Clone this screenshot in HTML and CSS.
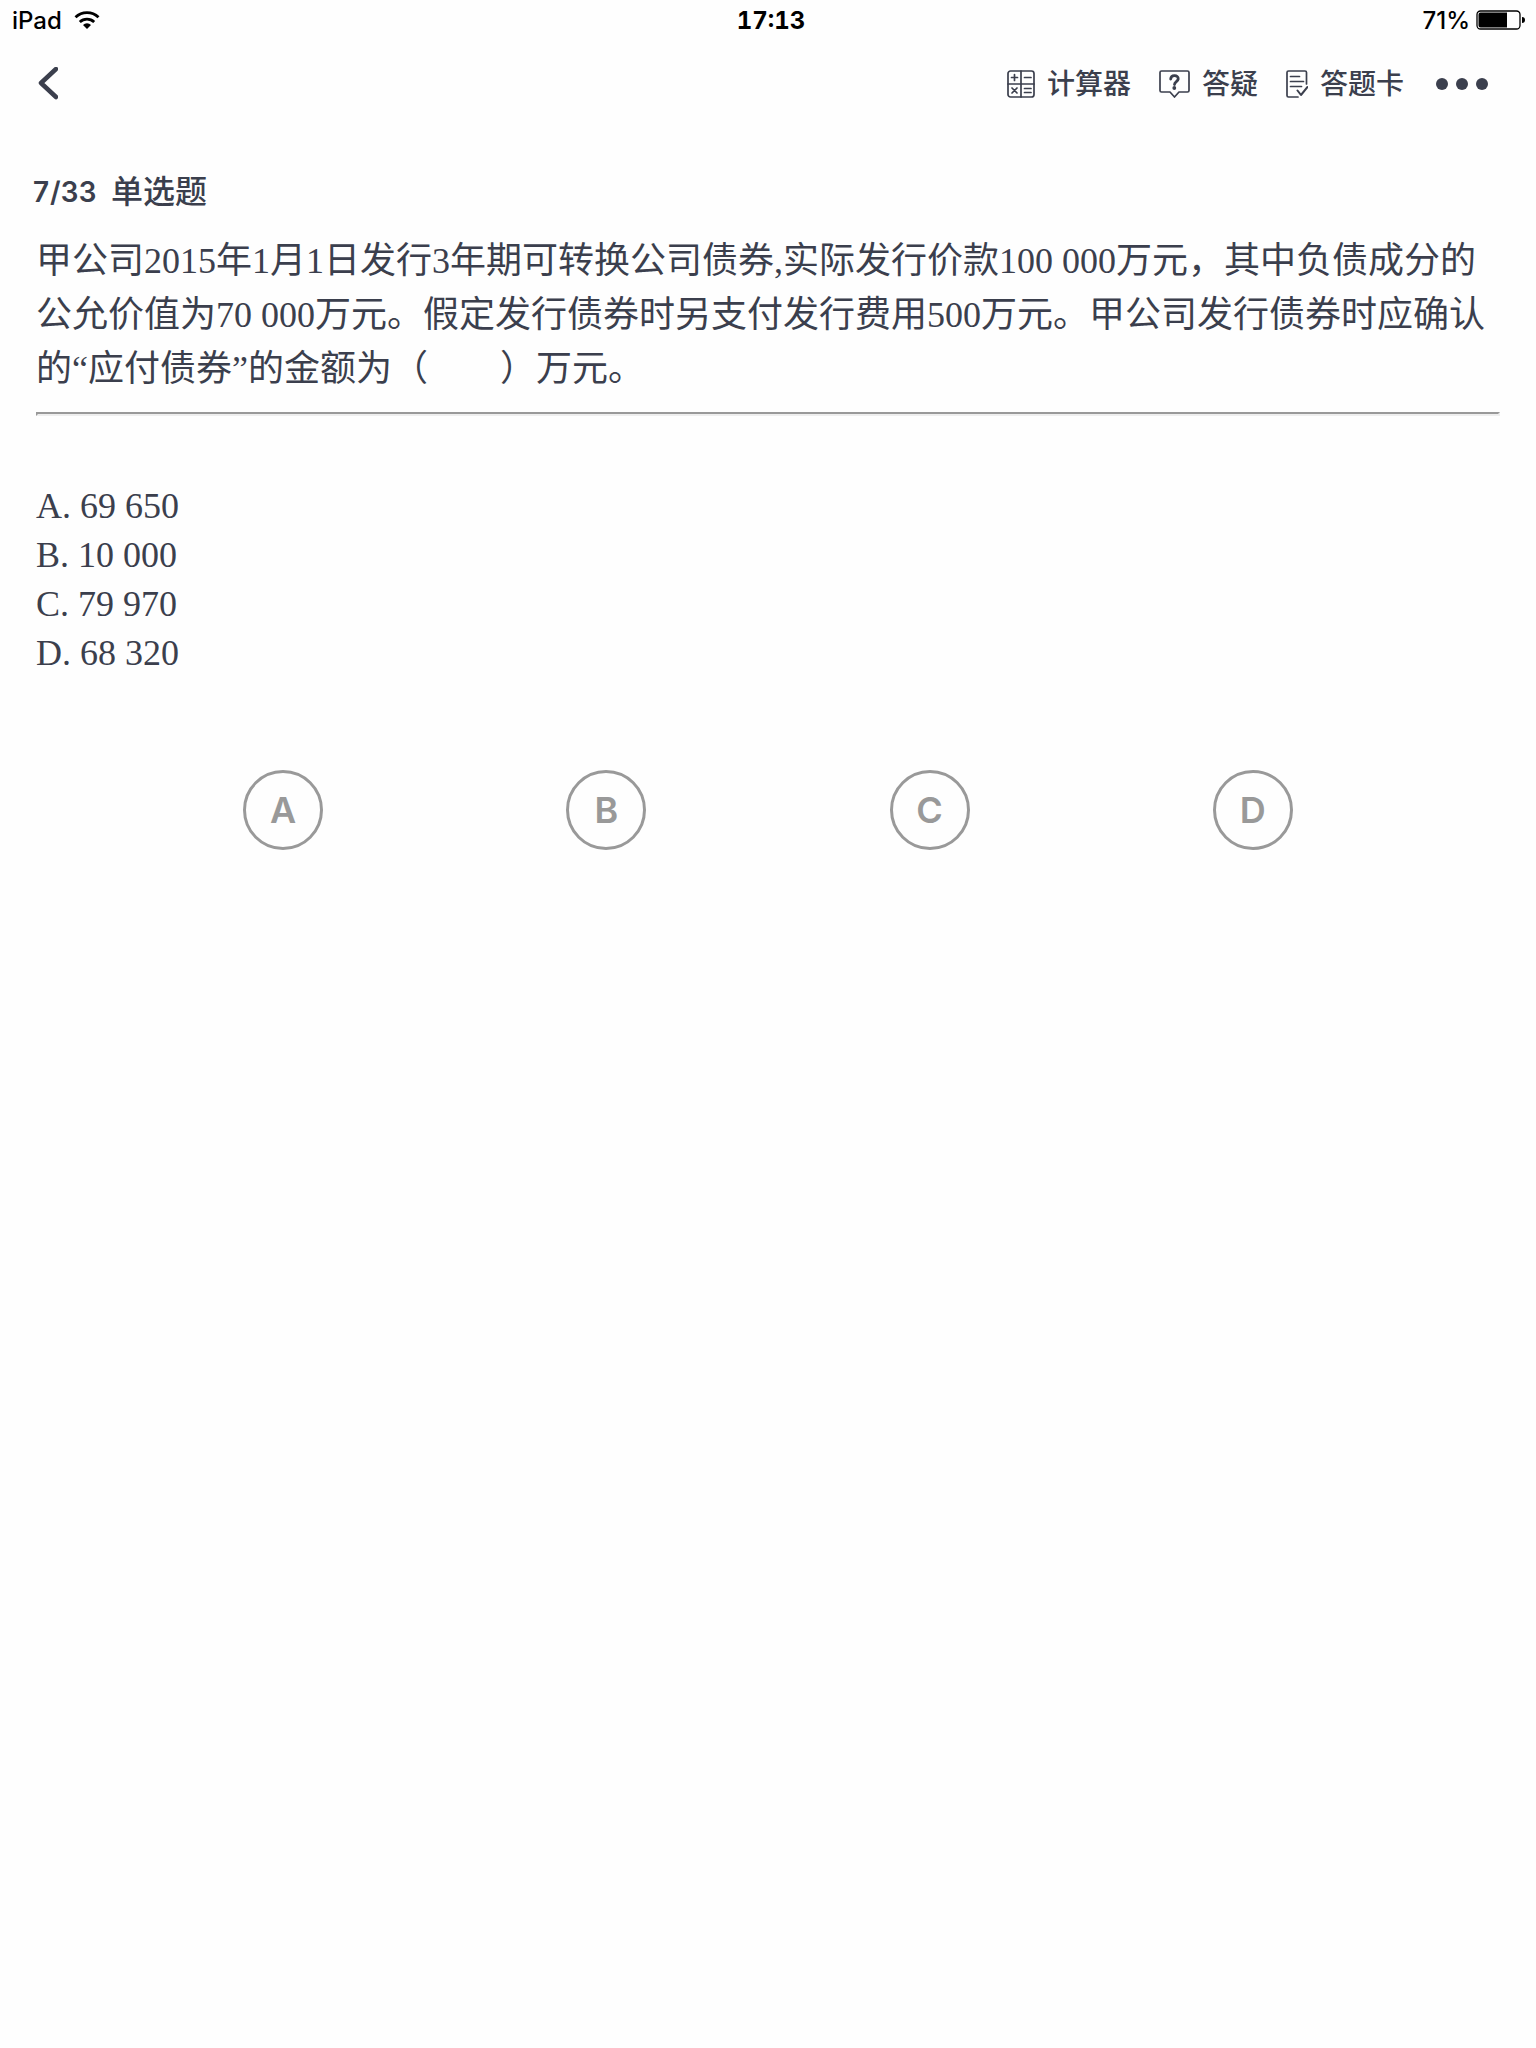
FILE: index.html
```html
<!DOCTYPE html>
<html lang="zh-CN">
<head>
    <meta charset="UTF-8">
    <meta name="viewport" content="width=device-width, initial-scale=1.0">
    <title>单选题</title>
    <link rel="stylesheet" href="styles.css">
</head>
<body>
    <div class="status-bar">
        <div class="status-left">
            <span>iPad</span>
            <svg class="wifi" width="26" height="20" viewBox="0 0 26 20" aria-hidden="true">
                <path d="M1.500 7.300a16.500 16.500 0 0 1 23 0M5.800 12a10.400 10.400 0 0 1 14.400 0" fill="none" stroke="#000" stroke-width="2.800"/>
                <path d="M13 19l-4-4a5.6 5.6 0 0 1 8 0z"/>
            </svg>
        </div>
        <div class="status-time">17:13</div>
        <div class="status-right">
            <span>71%</span>
            <svg width="50" height="20" viewBox="0 0 50 20" aria-hidden="true">
                <rect x="1" y="1" width="43" height="18" rx="3.5" fill="none" stroke="#000" stroke-width="1.3"/>
                <path d="M4.500 2.500H31v15H4.500a2 2 0 0 1-2-2v-11a2 2 0 0 1 2-2zM46 7q3 0 3 3t-3 3z"/>
            </svg>
        </div>
    </div>

    <header class="nav">
        <button type="button" class="nav-btn back" aria-label="返回">
            <svg width="20" height="34" viewBox="0 0 20 34"><path d="M18 2L3 16 18 30" stroke-width="4.500"/></svg>
        </button>
        <button type="button" class="nav-btn">
            <svg width="28" height="28" viewBox="0 0 28 28">
                <rect x="1" y="1" width="26" height="26" rx="2.500"/>
                <path d="M14 1v26M1 14h26M4.500 7.500h6M7.500 4.500v6M17.500 7.500h6.500M5 18l5 5M10 18l-5 5M17.500 18.500h6.500M17.500 22.500h6.500"/>
            </svg>
            <span>计算器</span>
        </button>
        <button type="button" class="nav-btn">
            <svg width="31" height="28" viewBox="0 0 31 28">
                <path d="M2.500 1h26q1.500 0 1.500 1.500v18q0 1.500-1.500 1.500h-8.500l-4.500 5-4.500-5h-8.500q-1.500 0-1.500-1.500v-18q0-1.500 1.500-1.500z"/>
                <path d="M11.700 9c.3-4.800 7.800-4.300 7.500 0-.3 2.700-3.700 2.700-3.700 5.600" stroke-width="2.800"/>
                <circle class="fill" cx="15.300" cy="18" r="1.900"/>
            </svg>
            <span>答疑</span>
        </button>
        <button type="button" class="nav-btn card">
            <svg width="22" height="28" viewBox="0 0 22 28">
                <path d="M20.500 14V2.500q0-1.500-1.500-1.500H2.500Q1 1 1 2.500v23q0 1.500 1.500 1.500h9.500M4.500 6.500h9M4.500 11.500h13M4.500 16.500h11"/>
                <path d="M11.500 20.500l3.500 4.500 6.500-8" stroke-width="2"/>
            </svg>
            <span>答题卡</span>
        </button>
        <button type="button" class="nav-btn more" aria-label="更多">
            <svg width="52" height="12" viewBox="0 0 52 12">
                <circle class="fill" cx="6" cy="6" r="6"/>
                <circle class="fill" cx="26" cy="6" r="6"/>
                <circle class="fill" cx="46" cy="6" r="6"/>
            </svg>
        </button>
    </header>

    <main>
        <h1 class="title"><span class="count">7/33</span>单选题</h1>
        <div class="question">
            <p>甲公司2015年1月1日发行3年期可转换公司债券,实际发行价款100 000万元，其中负债成分的公允价值为70 000万元。假定发行债券时另支付发行费用500万元。甲公司发行债券时应确认的“应付债券”的金额为（　　）万元。</p>
            <hr>
            <ol class="options">
                <li>A. 69 650</li>
                <li>B. 10 000</li>
                <li>C. 79 970</li>
                <li>D. 68 320</li>
            </ol>
        </div>
        <div class="answers">
            <button type="button">A</button>
            <button type="button">B</button>
            <button type="button">C</button>
            <button type="button">D</button>
        </div>
    </main>
</body>
</html>
```

FILE: styles.css
```css
body {
    margin: 0;
    background: #fefefe;
    color: #3b3f4d;
    font-family: Inter, "Noto Sans CJK SC", sans-serif;
}
.status-bar {
    display: grid;
    grid-template-columns: 1fr auto 1fr;
    align-items: center;
    height: 40px;
    padding: 0 10px 0 12px;
    color: #000;
    font-size: 24px;
    font-weight: 500;
}
.status-left, .status-right {
    display: flex;
    align-items: center;
    gap: 12px;
}
.status-right {
    justify-content: flex-end;
    gap: 6px;
}
.status-time {
    padding-left: 4px;
    font-weight: 700;
    font-variant-numeric: tabular-nums;
}
.nav {
    display: flex;
    align-items: center;
    gap: 28px;
    height: 88px;
    padding: 0 48px 0 38px;
}
.nav-btn {
    display: flex;
    align-items: center;
    gap: 12px;
    padding: 0;
    border: 0;
    background: none;
    color: inherit;
    font: 500 28px/40px Inter, "Noto Sans CJK SC", sans-serif;
    cursor: pointer;
}
.nav-btn svg {
    fill: none;
    stroke: #3b3f4d;
    stroke-width: 1.7;
    stroke-linecap: round;
    stroke-linejoin: round;
}
.nav-btn .fill {
    fill: #3b3f4d;
    stroke: none;
}
.back {
    margin-right: auto;
}
.more {
    margin-left: 4px;
}
.title {
    display: flex;
    align-items: center;
    gap: 14px;
    margin: 40px 32px 18px;
    font-size: 32px;
    font-weight: 500;
    line-height: 48px;
}
.count {
    font-size: 28px;
    font-weight: 600;
    font-variant-numeric: tabular-nums;
}
.question {
    padding: 0 36px;
    font-family: "Liberation Serif", "Noto Sans CJK SC", serif;
    font-size: 36px;
}
.question p {
    margin: 0;
    line-height: 54px;
}
.question hr {
    margin: 16px 0 66px;
    border: 2px solid;
    border-color: #999 #eee #eee #999;
}
.options {
    margin: 0;
    padding: 0;
    list-style: none;
    line-height: 49px;
}
.answers {
    display: flex;
    justify-content: space-evenly;
    margin-top: 92px;
}
.answers button {
    width: 80px;
    height: 80px;
    padding: 0;
    border: 3px solid #999;
    border-radius: 50%;
    background: none;
    color: #999;
    font: 600 36px Inter, sans-serif;
    cursor: pointer;
}
```
